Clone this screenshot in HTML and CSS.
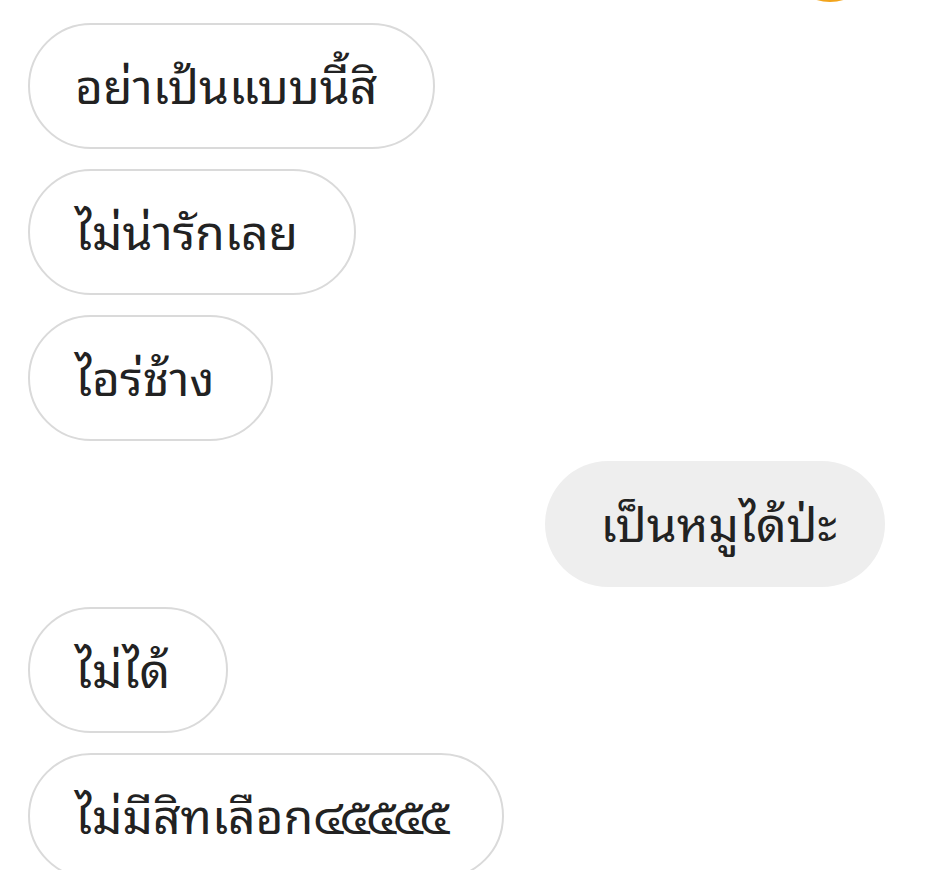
FILE: index.html
```html
<!DOCTYPE html>
<html lang="th">
<head>
    <meta charset="UTF-8">
    <meta name="viewport" content="width=device-width, initial-scale=1.0">
    <title>แชท</title>
    <link rel="stylesheet" href="styles.css">
</head>
<body>
    <div class="avatar"></div>
    <div class="chat">
        <div class="msg them">อย่าเป้นแบบนี้สิ</div>
        <div class="msg them">ไม่น่ารักเลย</div>
        <div class="msg them">ไอร่ช้าง</div>
        <div class="msg me">เป็นหมูได้ป่ะ</div>
        <div class="msg them">ไม่ได้</div>
        <div class="msg them">ไม่มีสิทเลือก<span class="num">๔๕๕๕๕</span></div>
    </div>
</body>
</html>
```

FILE: styles.css
```css
body {
    margin: 0;
    padding: 0;
    background: #ffffff;
    font-family: "Noto Sans Thai Looped", "Noto Sans", sans-serif;
    color: #222;
    overflow: hidden;
}
.avatar {
    position: absolute;
    top: -90px;
    left: 784px;
    width: 92px;
    height: 92px;
    border-radius: 50%;
    background: #f2a41c;
}
.chat {
    display: flex;
    flex-direction: column;
    gap: 20px;
    padding: 23px 42px 0 28px;
}
.msg {
    box-sizing: border-box;
    height: 126px;
    display: flex;
    align-items: center;
    padding: 0 56px 8px 45px;
    border-radius: 63px;
    font-size: 48px;
    white-space: nowrap;
}
.them {
    align-self: flex-start;
    background: #fff;
    border: 2.5px solid #dadada;
}
.me {
    align-self: flex-end;
    background: #eeeeee;
    padding: 0 48px 8px 56px;
}
.num {
    letter-spacing: -3.5px;
}
```
